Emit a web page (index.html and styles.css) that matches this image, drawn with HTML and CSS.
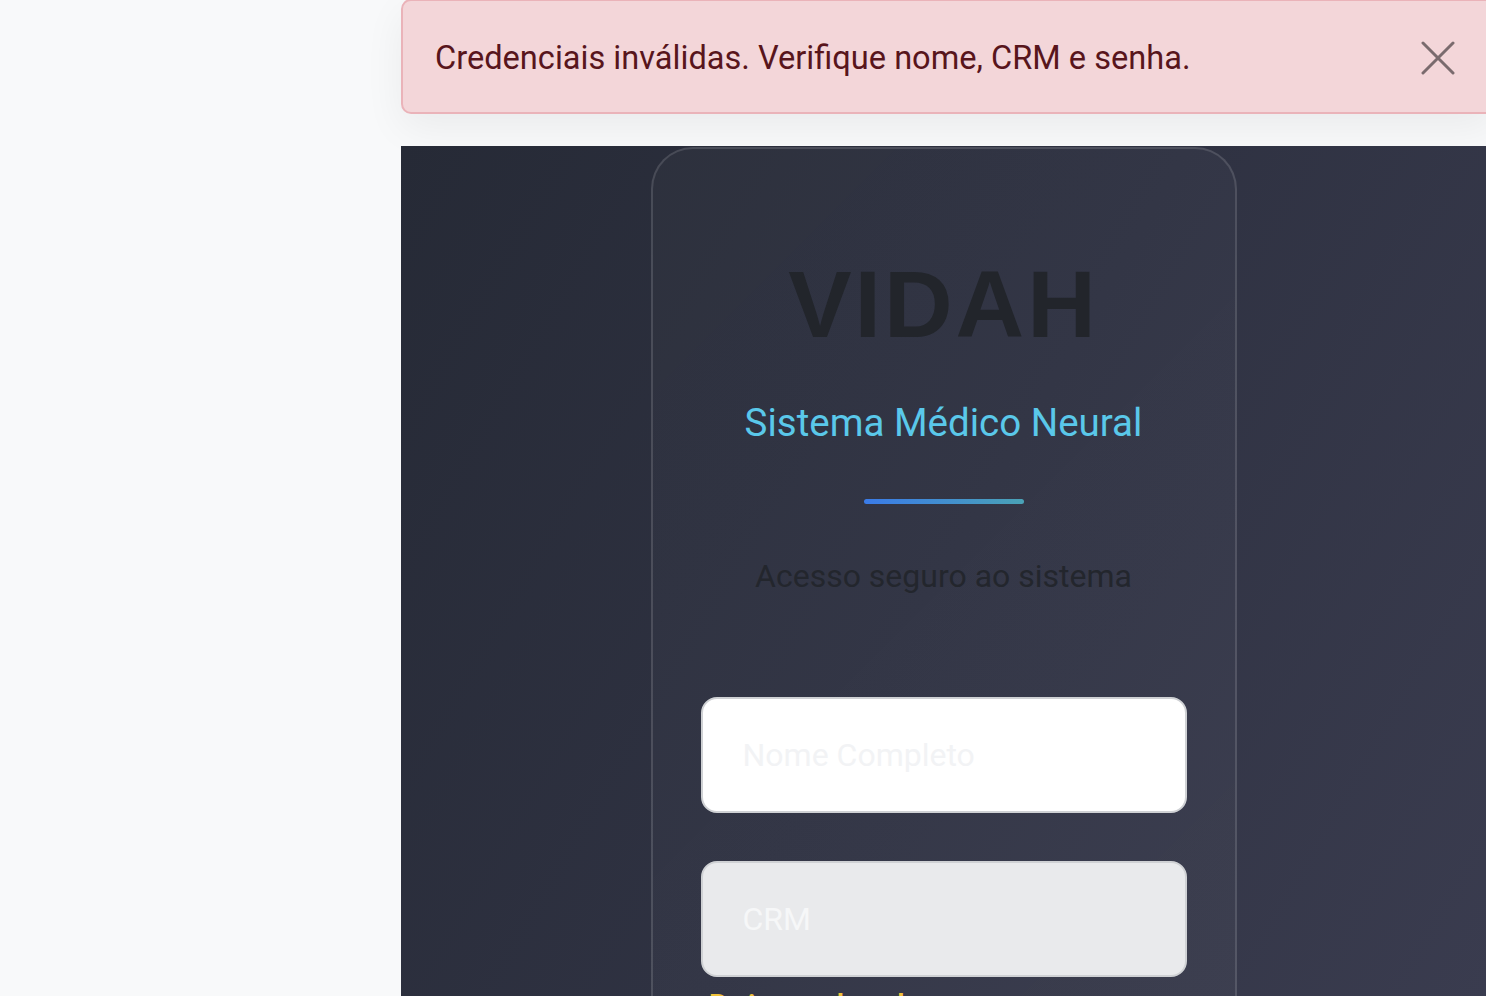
FILE: index.html
```html
<!DOCTYPE html>
<html lang="pt-BR">
<head>
<meta charset="utf-8">
<title>VIDAH</title>
<link rel="stylesheet" href="styles.css">
</head>
<body>
<div class="layout">
  <aside class="sidebar"></aside>
  <main class="main">
    <div class="alert" role="alert">
      <span class="alert-text">Credenciais inválidas. Verifique nome, CRM e senha.</span>
      <button class="alert-close" aria-label="Fechar">
        <svg width="34" height="34" viewBox="0 0 34 34"><path d="M2 2 L32 32 M32 2 L2 32" stroke="#7a6b6e" stroke-width="3" stroke-linecap="round"/></svg>
      </button>
    </div>
    <section class="stage">
      <div class="card">
        <h1 class="brand">VIDAH</h1>
        <p class="subtitle">Sistema Médico Neural</p>
        <div class="bar"></div>
        <p class="tagline">Acesso seguro ao sistema</p>
        <form class="form">
          <input class="field" type="text" placeholder="Nome Completo">
          <input class="field field-gray" type="text" placeholder="CRM">
          <p class="hint">Dois modos de acesso</p>
        </form>
      </div>
    </section>
  </main>
</div>
</body>
</html>
```
FILE: styles.css
```css
* { box-sizing: border-box; }
html, body { margin: 0; height: 100%; }
body {
  background: #f8f9fa;
  font-family: Roboto, "Liberation Sans", Arial, sans-serif;
  overflow: hidden;
}
.layout {
  display: flex;
  height: 996px;
}
.sidebar {
  width: 401px;
  flex: none;
  background: #f8f9fa;
}
.main {
  flex: 1;
  display: flex;
  flex-direction: column;
  gap: 32px;
  min-width: 0;
  min-height: 0;
}
.alert {
  flex: none;
  height: 115px;
  margin-top: -1px;
  margin-right: -10px;
  background: #f3d6d9;
  border: 2px solid #eab3b9;
  border-radius: 10px;
  display: flex;
  align-items: center;
  justify-content: space-between;
  padding: 0 39px 0 32px;
  box-shadow: 0 14px 40px rgba(0,0,0,0.06);
}
.alert-text {
  color: #58151c;
  font-size: 32.6px;
  letter-spacing: 0;
  padding-top: 2px;
}
.alert-close {
  border: 0;
  background: none;
  padding: 0;
  display: flex;
  margin-top: 2px;
}
.stage {
  flex: 1;
  min-height: 0;
  overflow: hidden;
  background: linear-gradient(120deg, #262a36 0%, #2f3242 50%, #3a3c4f 100%);
  display: flex;
  justify-content: center;
  align-items: flex-start;
}
.card {
  flex: none;
  width: 586px;
  margin-top: 1px;
  border: 2px solid rgba(255,255,255,0.13);
  border-bottom: none;
  border-radius: 42px 42px 0 0;
  background: linear-gradient(135deg, rgba(255,255,255,0.02), rgba(255,255,255,0.03));
  padding: 0 48px;
  display: flex;
  flex-direction: column;
  align-items: center;
}
.brand {
  margin: 100px 0 0;
  font-family: "Liberation Sans", Arial, sans-serif;
  font-weight: 700;
  font-size: 95px;
  line-height: 110px;
  letter-spacing: 3px;
  color: #22252b;
}
.subtitle {
  margin: 40px 0 0;
  font-size: 38.5px;
  line-height: 48px;
  color: #5ac8ea;
  font-weight: 400;
}
.bar {
  width: 160px;
  height: 5px;
  border-radius: 3px;
  margin-top: 52px;
  background: linear-gradient(90deg, #3a7be8, #4aa2b6);
}
.tagline {
  margin: 52px 0 0;
  font-size: 32px;
  line-height: 40px;
  color: #23262d;
}
.form {
  width: 100%;
  margin-top: 101px;
  display: flex;
  flex-direction: column;
  gap: 48px;
}
.field {
  width: 100%;
  height: 116px;
  border: 2px solid #cfd1d4;
  border-radius: 16px;
  background: #ffffff;
  padding: 0 40px;
  font-family: Roboto, "Liberation Sans", Arial, sans-serif;
  font-size: 32px;
  outline: none;
}
.field::placeholder { color: #f2f3f5; }
.field-gray { background: #e9eaec; }
.field-gray::placeholder { color: #f6f7f8; }
.hint {
  margin: -40px 0 0 8px;
  font-size: 32px;
  line-height: 40px;
  color: #f0c23a;
  font-weight: 500;
}
```
